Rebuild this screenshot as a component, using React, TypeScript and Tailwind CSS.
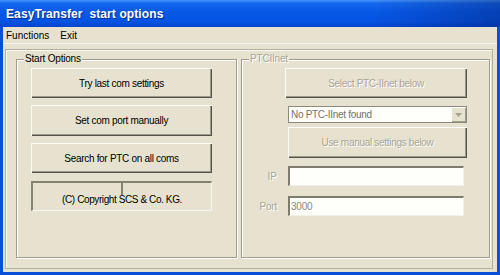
import React from 'react';

const FONT = "font-['Liberation_Sans',Arial,sans-serif]";

function RaisedButton({ label, disabled, className }: { label: string; disabled?: boolean; className: string }) {
  return (
    <div
      className={`${className} flex items-center justify-center bg-[#e6e2cf] text-[10px] tracking-[-0.3px] shadow-[inset_1px_1px_0_#fdfdf8,inset_-1px_-1px_0_#55534b,inset_-2px_-2px_0_#9b9888] ${
        disabled ? 'text-[#a8a595] [text-shadow:1px_1px_0_#fff]' : 'text-black'
      }`}
    >
      {label}
    </div>
  );
}

function SunkenInput({ value }: { value?: string }) {
  return (
    <div className="w-[176px] h-[20px] flex items-center bg-[#fefefb] border-t-2 border-l-2 border-[#7f7c6e] border-b border-r border-b-[#f2f0e6] border-r-[#f2f0e6] pl-[1px] text-[10px] tracking-[-0.2px] text-[#8a887c]">
      {value}
    </div>
  );
}

function GroupBox({ title, disabled, className, children }: { title: string; disabled?: boolean; className: string; children: React.ReactNode }) {
  return (
    <div className={`${className} relative border border-[#a09d8c] shadow-[inset_1px_1px_0_#fff,1px_1px_0_#fff]`}>
      <span
        className={`absolute -top-[7px] left-[7px] bg-[#e6e2cf] px-[1px] text-[10px] leading-[12px] tracking-[-0.2px] ${
          disabled ? 'text-[#a8a595] [text-shadow:1px_1px_0_#fff]' : 'text-black'
        }`}
      >
        {title}
      </span>
      {children}
    </div>
  );
}

export default function App() {
  return (
    <div className={`${FONT} w-[500px] h-[275px] flex flex-col bg-[#0a4fd8] overflow-hidden`}>
      {/* Title bar */}
      <div className="h-[27px] shrink-0 flex items-center pl-[6px] bg-[linear-gradient(90deg,transparent_75%,rgba(0,20,90,0.35)_100%),linear-gradient(180deg,#4593f7_0%,#1467ee_12%,#0758e6_45%,#0653e2_80%,#0345cc_100%)]">
        <span className="whitespace-pre text-white font-bold text-[12px] tracking-[0.1px] [text-shadow:1px_1px_0_#0a2f8a]">
          {'EasyTransfer  start options'}
        </span>
      </div>

      {/* Client area */}
      <div className="flex-1 mx-[3px] mb-[3px] bg-[#e6e2cf] flex flex-col">
        {/* Menu */}
        <div className="h-[16px] flex items-center gap-[11px] pl-[3px] text-[10px] text-black">
          <span>Functions</span>
          <span>Exit</span>
        </div>
        <div className="h-px bg-[#f7f6ef]" />

        {/* Panel */}
        <div className="flex-1 mt-[5px] ml-[2px] mr-[4px] mb-[3px] border border-[#b3b09e] shadow-[inset_1px_1px_0_#fbfaf4] flex pt-[9px] pl-[10px] gap-[4px]">
          <GroupBox title="Start Options" className="w-[221px] h-[199px]">
            <div className="flex flex-col pl-[14px] pt-[8px] gap-[7px]">
              <RaisedButton label="Try last com settings" className="w-[181px] h-[30px]" />
              <RaisedButton label="Set com port manually" className="w-[181px] h-[31px]" />
              <RaisedButton label="Search for PTC on all coms" className="w-[181px] h-[30px]" />
              <div className="relative w-[181px] h-[30px] mt-[1px] border-t-2 border-l-2 border-[#85826f] border-b border-r border-b-[#f7f6f0] border-r-[#f7f6f0] flex items-end justify-center pb-[3px] text-[10px] tracking-[-0.4px] text-black">
                <div className="absolute top-0 left-[88px] w-[2px] h-[12px] bg-[#85826f]" />
                (C) Copyright SCS &amp; Co. KG.
              </div>
            </div>
          </GroupBox>

          <GroupBox title="PTCIInet" disabled className="w-[249px] h-[199px]">
            <div className="flex flex-col pt-[8px]">
              <RaisedButton label="Select PTC-IInet below" disabled className="ml-[43px] w-[182px] h-[30px]" />

              {/* Combo box */}
              <div className="ml-[46px] mt-[8px] w-[179px] h-[17px] flex bg-[#fefefb] border border-[#8c8a7c]">
                <div className="flex-1 flex items-center pl-[2px] text-[10px] tracking-[-0.3px] text-[#75736a]">No PTC-IInet found</div>
                <div className="w-[15px] h-full flex items-center justify-center bg-[#e6e2cf] shadow-[inset_1px_1px_0_#fff,inset_-1px_-1px_0_#a09d8c]">
                  <svg width="7" height="4" viewBox="0 0 7 4">
                    <path d="M0 0 H7 L3.5 4 Z" fill="#a6a394" />
                  </svg>
                </div>
              </div>

              <RaisedButton label="Use manual settings below" disabled className="ml-[46px] mt-[4px] w-[179px] h-[31px]" />

              <div className="flex items-center mt-[8px] gap-[11px]">
                <span className="w-[35px] text-right text-[10px] text-[#a8a595] [text-shadow:1px_1px_0_#fff]">IP</span>
                <SunkenInput />
              </div>
              <div className="flex items-center mt-[10px] gap-[11px]">
                <span className="w-[35px] text-right text-[10px] tracking-[-0.2px] text-[#a8a595] [text-shadow:1px_1px_0_#fff]">Port</span>
                <SunkenInput value="3000" />
              </div>
            </div>
          </GroupBox>
        </div>
      </div>
    </div>
  );
}
